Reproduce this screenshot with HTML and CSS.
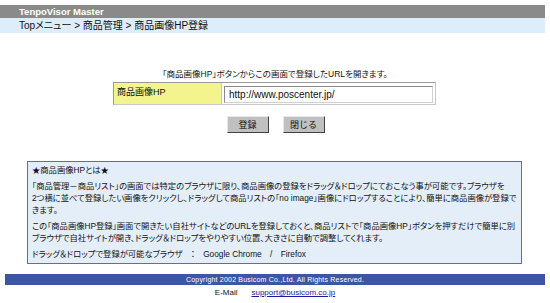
FILE: index.html
```html
<!DOCTYPE html>
<html lang="ja">
<head>
  <meta charset="UTF-8" />
  <title>商品画像HP登録 | TenpoVisor Master</title>
  <link rel="stylesheet" href="styles.css">
</head>
<body>
  <div class="head">
    <div class="app-title">TenpoVisor Master</div>
    <div class="crumbs">Topメニュー &gt; 商品管理 &gt; 商品画像HP登録</div>
  </div>

  <p class="lead">「商品画像HP」ボタンからこの画面で登録したURLを開きます。</p>

  <form class="url-form">
    <div class="field">
      <label class="field-label" for="hp-url">商品画像HP</label>
      <div class="field-value">
        <input type="text" id="hp-url" name="hp_url" value="http://www.poscenter.jp/">
      </div>
    </div>
    <div class="buttons">
      <button type="submit" class="btn">登録</button>
      <button type="button" class="btn">閉じる</button>
    </div>
  </form>

  <div class="info">
    <p class="info-title">★商品画像HPとは★</p>
    <p>「商品管理－商品リスト」の画面では特定のブラウザに限り、商品画像の登録をドラッグ＆ドロップにておこなう事が可能です。ブラウザを<br>2つ横に並べて登録したい画像をクリックし、ドラッグして商品リストの「no image」画像にドロップすることにより、簡単に商品画像が登録で<br>きます。</p>
    <p>この「商品画像HP登録」画面で開きたい自社サイトなどのURLを登録しておくと、商品リストで「商品画像HP」ボタンを押すだけで簡単に別<br>ブラウザで自社サイトが開き、ドラッグ＆ドロップをやりやすい位置、大きさに自動で調整してくれます。</p>
    <p>ドラッグ＆ドロップで登録が可能なブラウザ　：　Google Chrome　/　Firefox</p>
  </div>

  <div class="foot">
    <div class="copyright">Copyright 2002 Busicom Co.,Ltd. All Rights Reserved.</div>
    <div class="mail">E-Mail　<a href="mailto:support@busicom.co.jp">support@busicom.co.jp</a></div>
  </div>
</body>
</html>
```

FILE: styles.css
```css
* { box-sizing: border-box; }

body {
  margin: 0;
  background: #fff;
  color: #111;
  font-family: "Liberation Sans", "Noto Sans CJK JP", sans-serif;
  font-feature-settings: "palt";
  width: 550px;
}

.head {
  padding-top: 5px;
  width: 545px;
}

.app-title {
  background: #8a8a8a;
  color: #fff;
  font-weight: bold;
  font-size: 9.5px;
  height: 13px;
  line-height: 13px;
  padding-left: 19px;
}

.crumbs {
  background: #ddedf9;
  font-size: 10px;
  height: 15px;
  line-height: 15px;
  padding-left: 19px;
}

.lead {
  margin: 35px 0 0;
  text-align: center;
  font-size: 8.5px;
  line-height: 12px;
}

.url-form {
  margin: 0;
}

.field {
  display: flex;
  width: 323px;
  margin: 2px 0 0 113px;
  border: 1px solid #9a9a9a;
  border-right-color: #c8c8c8;
  border-bottom-color: #c8c8c8;
}

.field-label {
  width: 108px;
  background: #f4f48e;
  font-size: 9px;
  line-height: 19px;
  padding-left: 3px;
  border-right: 1px solid #c8c8c8;
}

.field-value {
  flex: 1;
  padding: 1px 2px;
}

.field-value input {
  width: 100%;
  height: 17px;
  border: 1px solid #8a8a8a;
  border-right-color: #d0d0d0;
  border-bottom-color: #d0d0d0;
  font-family: "Liberation Sans", sans-serif;
  font-size: 10px;
  padding: 0 4px;
  color: #111;
}

.buttons {
  display: flex;
  justify-content: center;
  gap: 14px;
  margin-top: 11px;
  padding-left: 1px;
}

.btn {
  background: #c0c0c0;
  border: 1px solid;
  border-color: #e8e8e8 #404040 #404040 #e8e8e8;
  font-family: "Noto Sans CJK JP", sans-serif;
  font-size: 9px;
  height: 17px;
  width: 42px;
  padding: 0;
  color: #111;
}

.info {
  margin: 28px 0 0 27px;
  width: 495px;
  height: 103px;
  background: #e4eef9;
  border: 1px solid #6a6a96;
  padding: 2px 4px 0;
  font-size: 8.3px;
  line-height: 12px;
  white-space: nowrap;
}

.info p {
  margin: 0 0 4px;
}

.foot {
  margin-top: 10px;
}

.copyright {
  margin-left: 5px;
  width: 540px;
  background: #3c56a4;
  color: #fff;
  font-size: 7px;
  height: 11px;
  line-height: 11px;
  text-align: center;
  letter-spacing: 0.2px;
}

.mail {
  text-align: center;
  font-size: 8px;
  margin-top: 2px;
  line-height: 12px;
}

.mail a {
  color: #1a1a9a;
  margin-left: 6px;
}
```
